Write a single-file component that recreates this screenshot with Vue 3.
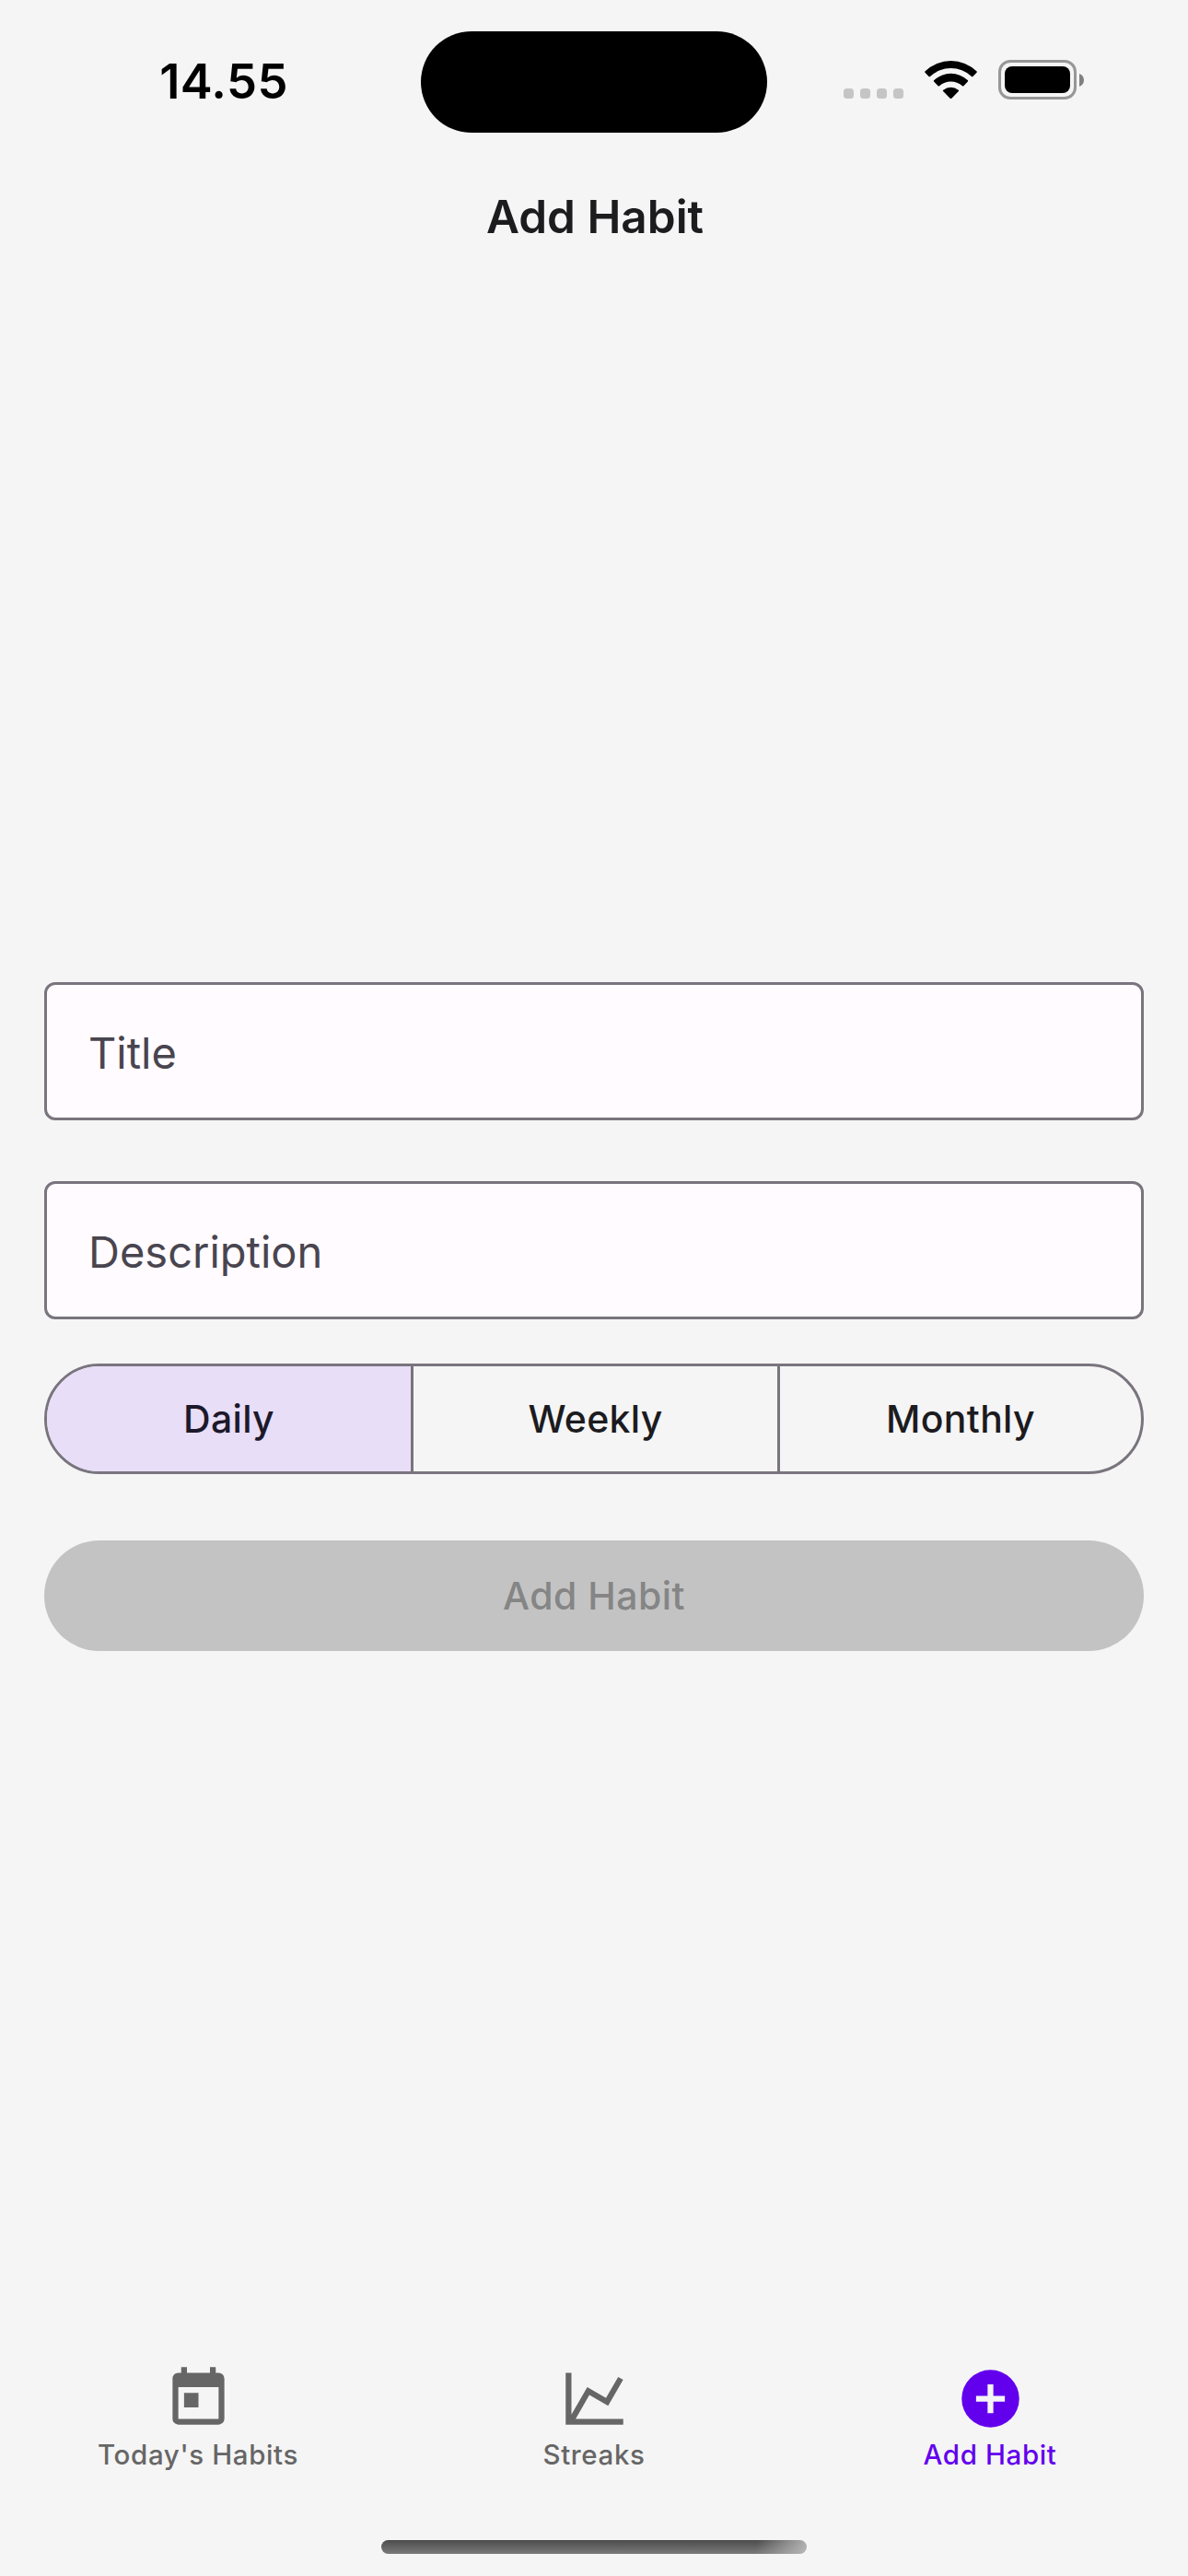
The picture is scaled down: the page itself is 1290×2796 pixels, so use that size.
<script setup>
import { ref } from 'vue'

const fields = [
  { name: 'title', label: 'Title' },
  { name: 'description', label: 'Description' },
]
const frequencies = ['Daily', 'Weekly', 'Monthly']
const frequency = ref('Daily')

const tabs = [
  {
    id: 'today',
    label: "Today's Habits",
    icon: 'M7,10H12V15H7M19,19H5V8H19M19,3H18V1H16V3H8V1H6V3H5C3.89,3 3,3.9 3,5V19A2,2 0 0,0 5,21H19A2,2 0 0,0 21,19V5A2,2 0 0,0 19,3Z',
  },
  {
    id: 'streaks',
    label: 'Streaks',
    icon: 'M16,11.78L20.24,4.45L21.97,5.45L16.74,14.5L10.23,10.75L5.46,19H22V21H2V3H4V17.54L9.5,8L16,11.78Z',
  },
  {
    id: 'add',
    label: 'Add Habit',
    icon: 'M17,13H13V17H11V13H7V11H11V7H13V11H17M12,2A10,10 0 0,0 2,12A10,10 0 0,0 12,22A10,10 0 0,0 22,12A10,10 0 0,0 12,2Z',
  },
]
const activeTab = ref('add')
</script>

<template>
  <div class="screen">
    <div class="status">
      <div class="time"><span>14.55</span></div>
      <div class="island"></div>
      <div class="indicators">
        <div class="dots"><i v-for="n in 4" :key="n"></i></div>
        <svg class="wifi" viewBox="0 0 171 126">
          <path d="M2 37A120 120 0 0 1 169 37Q172 39 169 42L158 53Q155 56 152 53A98 98 0 0 0 19 53Q16 56 13 53L2 42Q-1 39 2 37Z" />
          <path d="M31 66A80 80 0 0 1 140 66Q143 68 140 71L128 84Q125 87 122 84A56 56 0 0 0 49 84Q46 87 43 84L31 71Q28 68 31 66Z" />
          <path d="M61 98A38 38 0 0 1 110 98Q113 100 110 103L88 125Q85.500 127 83 125L61 103Q58 100 61 98Z" />
        </svg>
        <div class="battery"><div class="charge"></div></div>
        <svg class="nub" viewBox="0 0 5 14"><path d="M0 0Q5 2 5 7T0 14Z" /></svg>
      </div>
    </div>

    <header class="header"><span>Add Habit</span></header>

    <main class="form">
      <div v-for="field in fields" :key="field.name" class="field">
        <span :class="field.name">{{ field.label }}</span>
      </div>
      <div class="segments">
        <div
          v-for="item in frequencies"
          :key="item"
          class="segment"
          :class="{ selected: item === frequency }"
          @click="frequency = item"
        >
          <span>{{ item }}</span>
        </div>
      </div>
      <div class="submit"><span>Add Habit</span></div>
    </main>

    <nav class="tabs">
      <div
        v-for="tab in tabs"
        :key="tab.id"
        class="tab"
        :class="[tab.id, { active: tab.id === activeTab }]"
        @click="activeTab = tab.id"
      >
        <svg viewBox="0 0 24 24"><path :d="tab.icon" /></svg>
        <span>{{ tab.label }}</span>
      </div>
    </nav>
    <div class="home"></div>
  </div>
</template>

<style>
body {
  margin: 0;
  background: #f5f5f5;
}
</style>

<style scoped>
.screen {
  width: 1290px;
  height: 2796px;
  overflow: hidden;
  display: flex;
  flex-direction: column;
  background: #f5f5f5;
  font-family: Inter, "Liberation Sans", sans-serif;
  color: #1c1b1f;
  white-space: nowrap;
}
.screen * {
  box-sizing: border-box;
}
.status {
  height: 177px;
  display: grid;
  grid-template-columns: 457px 376px 1fr;
  align-items: start;
}
.time {
  height: 176px;
  padding-left: 29px;
  display: flex;
  align-items: center;
  justify-content: center;
  font-size: 52.500px;
  font-weight: 600;
  letter-spacing: 0.400px;
  color: #000;
}
.island {
  height: 110.500px;
  margin-top: 33.500px;
  border-radius: 56px;
  background: #000;
}
.indicators {
  padding: 65px 0 0 83px;
  display: flex;
}
.dots {
  display: flex;
  gap: 7px;
  margin: 31px 23px 0 0;
}
.dots i {
  width: 11px;
  height: 11px;
  border-radius: 3.500px;
  background: #c5c5c5;
}
.wifi {
  width: 57px;
  height: 42px;
  margin-right: 23px;
}
.battery {
  width: 85px;
  height: 43px;
  padding: 4px;
  border: 3px solid #979797;
  border-radius: 13px;
}
.charge {
  width: 71px;
  height: 29px;
  border-radius: 8px;
  background: #000;
}
.nub {
  width: 5px;
  height: 14px;
  margin: 15px 0 0 3px;
  fill: #808080;
}
.header {
  height: 116px;
  padding-left: 2px;
  display: flex;
  align-items: center;
  justify-content: center;
  font-size: 49.500px;
  font-weight: 600;
  color: #1c1c1e;
}
.form {
  flex: 1;
  padding: 773px 48px 0;
}
.field {
  height: 150px;
  margin-bottom: 66px;
  padding: 2px 0 0 45px;
  display: flex;
  align-items: center;
  border: 3px solid #79747e;
  border-radius: 12px;
  background: #fffbff;
  color: #49454f;
  font-size: 47px;
}
.field + .segments {
  margin-top: -18px;
}
.segments {
  height: 120px;
  display: grid;
  grid-template-columns: 398px 398px 1fr;
  border: 3px solid #79747e;
  border-radius: 60px;
  overflow: hidden;
}
.segment {
  display: flex;
  align-items: center;
  justify-content: center;
  font-size: 41px;
  font-weight: 500;
  letter-spacing: 0.300px;
}
.segment:not(:last-child) {
  border-right: 3px solid #79747e;
}
.selected {
  background: #e8def8;
  color: #1d192b;
}
.submit {
  height: 120px;
  margin-top: 72px;
  display: flex;
  align-items: center;
  justify-content: center;
  border-radius: 60px;
  background: #c3c3c3;
  color: #858585;
  font-size: 41px;
  font-weight: 500;
  letter-spacing: 0.450px;
}
.tabs {
  height: 191px;
  display: grid;
  grid-template-columns: repeat(3, 1fr);
}
.tab {
  display: flex;
  flex-direction: column;
  align-items: center;
  color: #666;
  font-size: 29.500px;
  font-weight: 500;
  letter-spacing: 0.620px;
  line-height: 36px;
}
.tab svg {
  width: 75px;
  height: 75px;
  margin-bottom: 5px;
  fill: currentColor;
}
.active {
  color: #6200ee;
}
.home {
  width: 462px;
  height: 15px;
  margin: 0 auto 24px;
  border-radius: 8px;
  background:
    linear-gradient(100deg, rgba(190, 190, 190, 0) 88%, rgba(190, 190, 190, 0.9) 100%),
    linear-gradient(#4c4c4c, #7a7a7a);
}
</style>
